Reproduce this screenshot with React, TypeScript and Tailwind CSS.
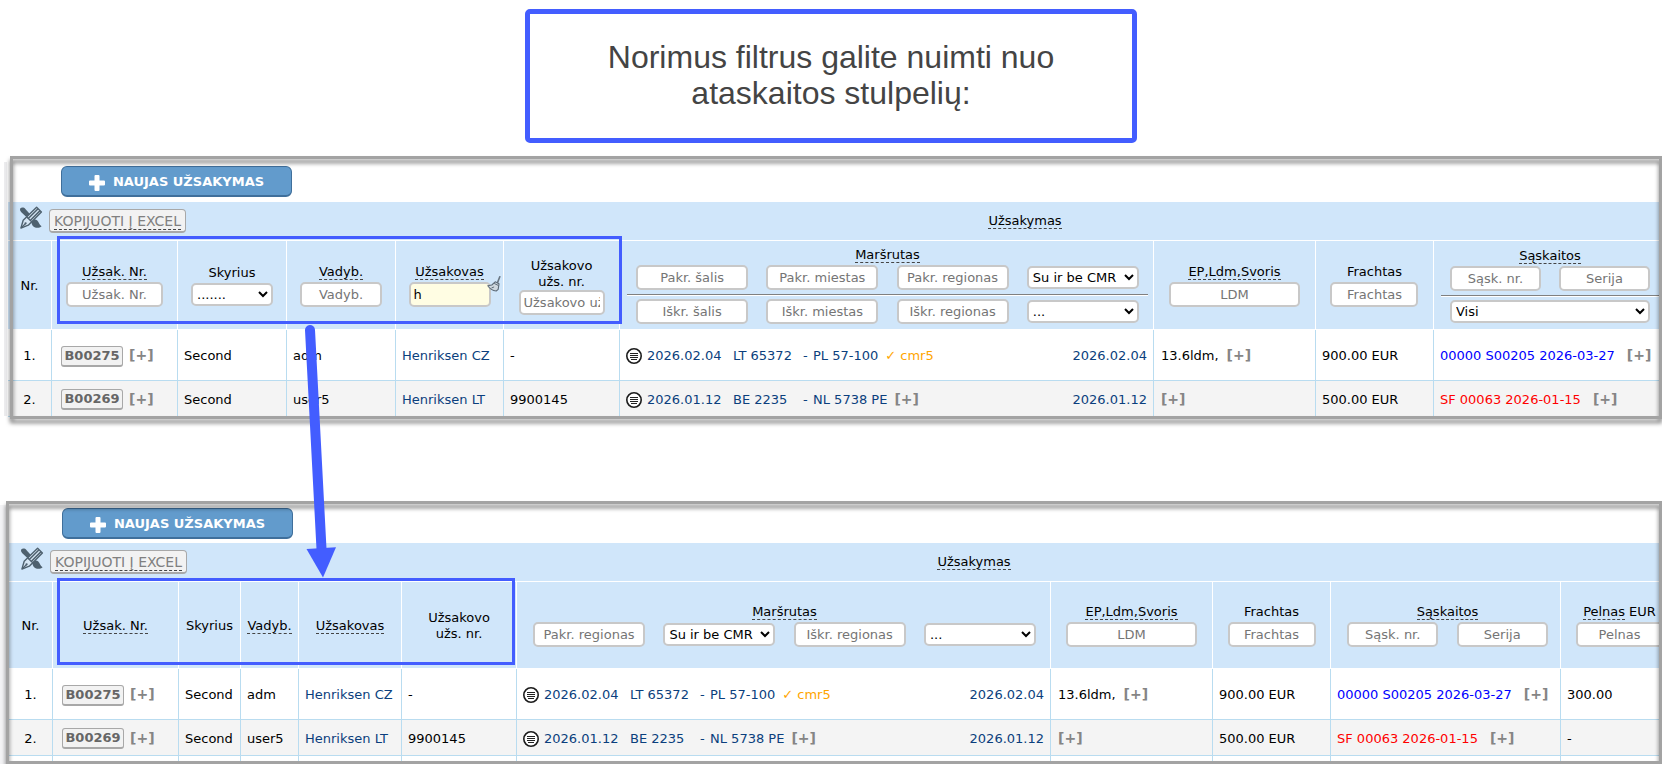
import { useId } from "react";
import type { ReactNode } from "react";

const inputBase =
  "block h-[25px] rounded-[5px] border-2 border-[#c8c8c8] px-[3px] text-[13px] leading-4 text-black outline-none placeholder:text-[#757575]";
const selectBase =
  "block h-[23px] rounded-[5px] border-2 border-[#c8c8c8] bg-white text-[13px] leading-4 text-black outline-none";

function Caption({ children, dashed = false, htmlFor }: { children: ReactNode; dashed?: boolean; htmlFor?: string }) {
  const cls = dashed
    ? "inline-block border-b border-dashed border-[#444] leading-[14px] whitespace-nowrap"
    : "inline-block border-b border-transparent leading-[14px] whitespace-nowrap";
  return htmlFor ? (
    <label htmlFor={htmlFor} className={cls}>
      {children}
    </label>
  ) : (
    <span className={cls}>{children}</span>
  );
}

function TextFilter({ name, width }: { name: string; width: string }) {
  return (
    <input
      type="text"
      aria-label={name}
      placeholder={name}
      className={`${inputBase} bg-white text-center ${width}`}
    />
  );
}

function SelectFilter({ name, option, width }: { name: string; option: string; width: string }) {
  return (
    <select aria-label={name} className={`${selectBase} ${width}`}>
      <option>{option}</option>
    </select>
  );
}

function Stack({ children }: { children: ReactNode }) {
  return <div className="flex flex-col items-center gap-[2px]">{children}</div>;
}

function LabelledInput({ label, placeholder, dashed, width }: { label: string; placeholder: string; dashed?: boolean; width: string }) {
  const id = useId();
  return (
    <Stack>
      <Caption dashed={dashed} htmlFor={id}>
        {label}
      </Caption>
      <input id={id} type="text" placeholder={placeholder} className={`${inputBase} bg-white text-center ${width}`} />
    </Stack>
  );
}

function Divider() {
  return <hr className="mt-1 mb-[3px] h-[2px] w-full border-t border-b border-t-[#808080] border-b-white" />;
}

function ToolsIcon() {
  return (
    <svg viewBox="0 0 24 24" className="size-6 shrink-0" aria-hidden="true">
      <path d="M1.200 2.600c1.400-1.600 3.800-1.200 5.200.3l6.400 7.400-3 2.900-7.200-6.600C1.400 5.400.6 3.900 1.200 2.600z" fill="#4e616f" />
      <path d="M12.800 15.300c1.200-2 3.900-2.200 5.500-.7 1.800 1.700 1.800 4.300 4.300 5.700-2.900 2.500-7.400 1.600-9.100-.9-.9-1.300-1.300-2.700-.7-4.100z" fill="#4e616f" />
      <path d="M4.200 14.300 17.600 1.300l4.800 4.600L9.300 19.200l-7.400 2.900z" fill="#d6e6f4" stroke="#4e616f" strokeWidth="1.400" strokeLinejoin="round" />
      <path d="m9 12.700 9.800-9.700M11 14.700 20.900 4.900" stroke="#4e616f" strokeWidth="1.500" />
      <path d="m7.800 11 5.200 5M2.200 21.700l4.200-4" stroke="#4e616f" strokeWidth="1.200" />
      <circle cx="6.600" cy="17.300" r="1.100" fill="#4e616f" />
    </svg>
  );
}

function BroomIcon() {
  return (
    <svg viewBox="0 0 14 16" className="h-4 w-3.5" aria-hidden="true">
      <path d="M12.800.8 10.600 6.400" stroke="#6a7783" strokeWidth="1.600" strokeLinecap="round" />
      <path d="M8.200 5.800 12 7.800l-.8 5.600-2 1.600C5.500 14.500 2.700 12.600.8 9.700L4.800 9z" fill="#cfd8df" stroke="#5d6b78" strokeWidth="1.100" strokeLinejoin="round" />
      <path d="m7.200 7.400 4.200 2.100M4.500 12l2.600-1.100" stroke="#5d6b78" strokeWidth="1" />
    </svg>
  );
}

function ListIcon() {
  return (
    <svg viewBox="0 0 16 16" className="size-4 shrink-0" aria-hidden="true">
      <circle cx="8" cy="8" r="7.200" fill="#fff" stroke="#1c1c1c" strokeWidth="1.600" />
      <path d="M4 5.500h8M4 7.500h8M4 9.500h8M5 11.500h6" stroke="#222" strokeWidth="1" />
    </svg>
  );
}

function PlusIcon() {
  return (
    <svg viewBox="0 0 16 16" className="mt-0.5 size-4" aria-hidden="true">
      <path d="M6.500 0h3q1 0 1 1v4.500H15q1 0 1 1v3q0 1-1 1h-4.500V15q0 1-1 1h-3q-1 0-1-1v-4.500H1q-1 0-1-1v-3q0-1 1-1h4.500V1q0-1 1-1z" fill="#fff" />
    </svg>
  );
}

function Expand() {
  return (
    <button type="button" className="pb-0.5 text-sm leading-4 font-bold text-[#858585]">
      [+]
    </button>
  );
}

function NewOrderButton() {
  return (
    <button
      type="button"
      className="flex h-[31px] w-[231px] items-center justify-center gap-2 rounded-md border border-b-2 border-[#3f6f9b] bg-[#629bcc] pt-0.5 text-[13px] font-bold text-white"
    >
      <PlusIcon />
      NAUJAS UŽSAKYMAS
    </button>
  );
}

function GroupRow({ lead, offset }: { lead: number; offset: string }) {
  return (
    <tr className="h-[39px] bg-[#d0e6fa]">
      <th colSpan={3} className="border-b border-white p-0 text-left align-top font-normal">
        <div className="flex items-start gap-1.5 pt-1 pl-[11px]">
          <ToolsIcon />
          <button
            type="button"
            className="mt-[3px] flex h-6 w-[137px] items-end justify-center rounded-[4px] border border-b-2 border-[#a8a8a8] bg-[#f2f2f2] pb-px text-sm leading-4 text-[#808080]"
          >
            <span className="border-b border-dashed border-[#444] whitespace-nowrap">KOPIJUOTI Į EXCEL</span>
          </button>
        </div>
      </th>
      <th colSpan={lead} className={`border-b border-white p-0 text-center font-normal ${offset}`}>
        <Caption dashed>Užsakymas</Caption>
      </th>
    </tr>
  );
}

function Head({ children, first = false, pad = "px-0" }: { children: ReactNode; first?: boolean; pad?: string }) {
  return (
    <th className={`border-b border-white pt-0.5 pb-0 text-center font-normal ${pad} ${first ? "" : "border-l"}`}>
      {children}
    </th>
  );
}

function Cell({ children, pad = "px-[7px]" }: { children?: ReactNode; pad?: string }) {
  return <td className={`border-b border-l border-[#b9dcf0] pt-0.5 pb-0 whitespace-nowrap ${pad}`}>{children}</td>;
}

type Order = {
  nr: string;
  code: string;
  user: string;
  client: string;
  clientNr: string;
  from: string;
  origin: string;
  target: string;
  cmr?: string;
  to: string;
  load?: string;
  freight: string;
  invoice: string;
  paid: boolean;
  profit: string;
};

const orders: Order[] = [
  {
    nr: "1.",
    code: "B00275",
    user: "adm",
    client: "Henriksen CZ",
    clientNr: "-",
    from: "2026.02.04",
    origin: "LT 65372",
    target: "PL 57-100",
    cmr: "cmr5",
    to: "2026.02.04",
    load: "13.6ldm,",
    freight: "900.00 EUR",
    invoice: "00000 S00205 2026-03-27",
    paid: true,
    profit: "300.00",
  },
  {
    nr: "2.",
    code: "B00269",
    user: "user5",
    client: "Henriksen LT",
    clientNr: "9900145",
    from: "2026.01.12",
    origin: "BE 2235",
    target: "NL 5738 PE",
    to: "2026.01.12",
    freight: "500.00 EUR",
    invoice: "SF 00063 2026-01-15",
    paid: false,
    profit: "-",
  },
];

function OrderRow({ order, index, profit = false }: { order: Order; index: number; profit?: boolean }) {
  return (
    <tr className={index === 0 ? "h-[51px] bg-white" : "h-9 bg-[#f4f4f4]"}>
      <td className="border-b border-[#b9dcf0] pt-0.5 text-center">{order.nr}</td>
      <Cell pad="px-[9px]">
        <div className="flex items-center gap-1.5">
          <button
            type="button"
            className="h-[21px] w-[62px] rounded-[3px] border border-b-2 border-[#a8a8a8] bg-[#f2f2f2] text-[13px] leading-4 font-bold text-[#666]"
          >
            {order.code}
          </button>
          <Expand />
        </div>
      </Cell>
      <Cell pad="px-1.5">Second</Cell>
      <Cell pad="px-1.5">{order.user}</Cell>
      <Cell pad="px-1.5">
        <a href="#client" className="text-[#0b3f7d]">
          {order.client}
        </a>
      </Cell>
      <Cell pad="px-1.5">{order.clientNr}</Cell>
      <Cell pad="px-1.5">
        <div className="flex items-center text-[#0b3f7d]">
          <ListIcon />
          <span className="ml-[5px] w-[86px]">{order.from}</span>
          <span className="w-[70px]">{order.origin}</span>
          <span className="w-2.5">-</span>
          <span>{order.target}</span>
          <span className="ml-[7px] text-[#ffa500]">{order.cmr ? `✓ ${order.cmr}` : <Expand />}</span>
          <span className="ml-auto">{order.to}</span>
        </div>
      </Cell>
      <Cell>
        <div className="flex items-center gap-2">
          {order.load ? <span>{order.load}</span> : null}
          <Expand />
        </div>
      </Cell>
      <Cell pad="px-1.5">{order.freight}</Cell>
      <Cell pad="px-1.5">
        <div className="flex items-center gap-3">
          <a href="#invoice" className={order.paid ? "text-[#0000ff]" : "text-[#ff0000]"}>
            {order.invoice}
          </a>
          <Expand />
        </div>
      </Cell>
      {profit ? <Cell pad="px-1.5">{order.profit}</Cell> : null}
    </tr>
  );
}

function CustomerFilter() {
  const id = useId();
  return (
    <Stack>
      <Caption dashed htmlFor={id}>
        Užsakovas
      </Caption>
      <div className="relative">
        <input id={id} type="text" defaultValue="h" className={`${inputBase} w-[82px] bg-[#fffde3]`} />
        <button type="button" aria-label="Išvalyti" className="absolute -top-1.5 -right-2.5">
          <BroomIcon />
        </button>
      </div>
    </Stack>
  );
}

function FilteredTable() {
  return (
    <table className="w-full table-fixed border-separate border-spacing-0">
      <colgroup>
        <col className="w-[43px]" />
        <col className="w-[126px]" />
        <col className="w-[109px]" />
        <col className="w-[109px]" />
        <col className="w-[108px]" />
        <col className="w-[116px]" />
        <col />
        <col className="w-[162px]" />
        <col className="w-[118px]" />
        <col className="w-[229px]" />
      </colgroup>
      <thead>
        <GroupRow lead={7} offset="pl-[102px]" />
        <tr className="h-[89px] bg-[#d0e6fa]">
          <Head first>Nr.</Head>
          <Head>
            <LabelledInput label="Užsak. Nr." placeholder="Užsak. Nr." dashed width="w-[97px]" />
          </Head>
          <Head>
            <Stack>
              <Caption>Skyrius</Caption>
              <SelectFilter name="Skyrius" option="......." width="w-[82px]" />
            </Stack>
          </Head>
          <Head>
            <LabelledInput label="Vadyb." placeholder="Vadyb." dashed width="w-[82px]" />
          </Head>
          <Head>
            <CustomerFilter />
          </Head>
          <Head>
            <div className="flex flex-col items-center">
              <span className="leading-4">
                Užsakovo
                <br />
                užs. nr.
              </span>
              <TextFilter name="Užsakovo užs. nr." width="w-[86px]" />
            </div>
          </Head>
          <Head pad="pl-[7px] pr-[5px]">
            <Stack>
              <Caption dashed>Maršrutas</Caption>
              <div className="w-full">
                <div className="grid grid-cols-4 items-center justify-items-center">
                  <TextFilter name="Pakr. šalis" width="w-28" />
                  <TextFilter name="Pakr. miestas" width="w-28" />
                  <TextFilter name="Pakr. regionas" width="w-28" />
                  <SelectFilter name="CMR" option="Su ir be CMR" width="w-28" />
                </div>
                <Divider />
                <div className="grid grid-cols-4 items-center justify-items-center">
                  <TextFilter name="Iškr. šalis" width="w-28" />
                  <TextFilter name="Iškr. miestas" width="w-28" />
                  <TextFilter name="Iškr. regionas" width="w-28" />
                  <SelectFilter name="Būsena" option="..." width="w-28" />
                </div>
              </div>
            </Stack>
          </Head>
          <Head>
            <LabelledInput label="EP,Ldm,Svoris" placeholder="LDM" dashed width="w-[131px]" />
          </Head>
          <Head>
            <LabelledInput label="Frachtas" placeholder="Frachtas" width="w-[88px]" />
          </Head>
          <Head pad="pl-[7px] pr-[3px]">
            <Stack>
              <Caption dashed>Sąskaitos</Caption>
              <div className="flex w-full flex-col items-center">
                <div className="grid w-full grid-cols-2 justify-items-center">
                  <TextFilter name="Sąsk. nr." width="w-[91px]" />
                  <TextFilter name="Serija" width="w-[91px]" />
                </div>
                <Divider />
                <SelectFilter name="Sąskaitos" option="Visi" width="w-[200px]" />
              </div>
            </Stack>
          </Head>
        </tr>
      </thead>
      <tbody>
        {orders.map((order, index) => (
          <OrderRow key={order.code} order={order} index={index} />
        ))}
      </tbody>
    </table>
  );
}

function CompactTable() {
  return (
    <table className="w-[calc(100%+16px)] table-fixed border-separate border-spacing-0">
      <colgroup>
        <col className="w-[43px]" />
        <col className="w-[126px]" />
        <col className="w-[62px]" />
        <col className="w-[58px]" />
        <col className="w-[103px]" />
        <col className="w-[115px]" />
        <col />
        <col className="w-[162px]" />
        <col className="w-[118px]" />
        <col className="w-[230px]" />
        <col className="w-[118px]" />
      </colgroup>
      <thead>
        <GroupRow lead={8} offset="pl-[30px]" />
        <tr className="h-[87px] bg-[#d0e6fa]">
          <Head first>Nr.</Head>
          <Head>
            <Caption dashed>Užsak. Nr.</Caption>
          </Head>
          <Head>
            <Caption>Skyrius</Caption>
          </Head>
          <Head>
            <Caption dashed>Vadyb.</Caption>
          </Head>
          <Head>
            <Caption dashed>Užsakovas</Caption>
          </Head>
          <Head>
            <span className="leading-4">
              Užsakovo
              <br />
              užs. nr.
            </span>
          </Head>
          <Head pad="pl-[7px] pr-[5px]">
            <Stack>
              <Caption dashed>Maršrutas</Caption>
              <div className="grid w-full grid-cols-4 items-center justify-items-center">
                <TextFilter name="Pakr. regionas" width="w-28" />
                <SelectFilter name="CMR" option="Su ir be CMR" width="w-28" />
                <TextFilter name="Iškr. regionas" width="w-28" />
                <SelectFilter name="Būsena" option="..." width="w-28" />
              </div>
            </Stack>
          </Head>
          <Head>
            <LabelledInput label="EP,Ldm,Svoris" placeholder="LDM" dashed width="w-[131px]" />
          </Head>
          <Head>
            <LabelledInput label="Frachtas" placeholder="Frachtas" width="w-[88px]" />
          </Head>
          <Head pad="pl-[7px] pr-[3px]">
            <Stack>
              <Caption dashed>Sąskaitos</Caption>
              <div className="grid w-full grid-cols-2 justify-items-center">
                <TextFilter name="Sąsk. nr." width="w-[91px]" />
                <TextFilter name="Serija" width="w-[91px]" />
              </div>
            </Stack>
          </Head>
          <Head>
            <Stack>
              <span className="flex gap-1 whitespace-nowrap">
                <Caption dashed>Pelnas</Caption>
                <Caption>EUR</Caption>
              </span>
              <TextFilter name="Pelnas" width="w-[88px]" />
            </Stack>
          </Head>
        </tr>
      </thead>
      <tbody>
        {orders.map((order, index) => (
          <OrderRow key={order.code} order={order} index={index} profit />
        ))}
        <tr className="h-2 bg-white" aria-hidden="true">
          <td className="p-0" />
          {["b", "c", "d", "e", "f", "g", "h", "i", "j", "k"].map((key) => (
            <td key={key} className="border-l border-[#b9dcf0] p-0" />
          ))}
        </tr>
      </tbody>
    </table>
  );
}

function Frame({ left }: { left: string }) {
  return (
    <div
      className={`pointer-events-none absolute inset-y-0 right-0 border-[3px] border-[#a3a3a3] drop-shadow-[0_4px_2px_rgba(0,0,0,0.55)] ${left}`}
    />
  );
}

export default function App() {
  return (
    <main className="relative overflow-hidden bg-white font-['DejaVu_Sans',Verdana,sans-serif] text-[13px] leading-4 text-black">
      <h1 className="mx-auto mt-[9px] w-[612px] rounded-[5px] border-[5px] border-[#435dff] px-16 pt-[25px] pb-[27px] text-center font-['Liberation_Sans',Arial,sans-serif] text-[32px] leading-9 font-normal text-[#444]">
        Norimus filtrus galite nuimti nuo ataskaitos stulpelių:
      </h1>

      <section className="relative mt-[13px] pt-[3px]">
        <div className="absolute top-1.5 bottom-[3px] left-1 w-[3px] bg-[#ececee]" />
        <div className="ml-2 h-[260px] overflow-hidden bg-white">
          <div className="h-[43px] pt-[7px] pl-[53px]">
            <NewOrderButton />
          </div>
          <FilteredTable />
        </div>
        <Frame left="left-[10px]" />
        <div className="pointer-events-none absolute top-20 left-[57px] h-[88px] w-[565px] border-[3px] border-[#435dff]" />
      </section>

      <section className="relative mt-[82px] pt-[3px]">
        <div className="absolute top-1 bottom-0 left-0 w-1.5 bg-[#f3f3f5]" />
        <div className="ml-[9px] h-[260px] overflow-hidden bg-white">
          <div className="h-[39px] pt-1 pl-[53px]">
            <NewOrderButton />
          </div>
          <CompactTable />
        </div>
        <Frame left="left-1.5" />
        <div className="pointer-events-none absolute top-[77px] left-[57px] h-[87px] w-[458px] border-[3px] border-[#435dff]" />
      </section>

      <svg viewBox="0 0 44 264" className="pointer-events-none absolute top-80 left-[300px] h-[264px] w-11" aria-hidden="true">
        <path d="M10 10 21.500 229" stroke="#435dff" strokeWidth="10" strokeLinecap="round" />
        <path d="M6.500 229 36 227.300 23 257.500z" fill="#435dff" />
      </svg>
    </main>
  );
}
